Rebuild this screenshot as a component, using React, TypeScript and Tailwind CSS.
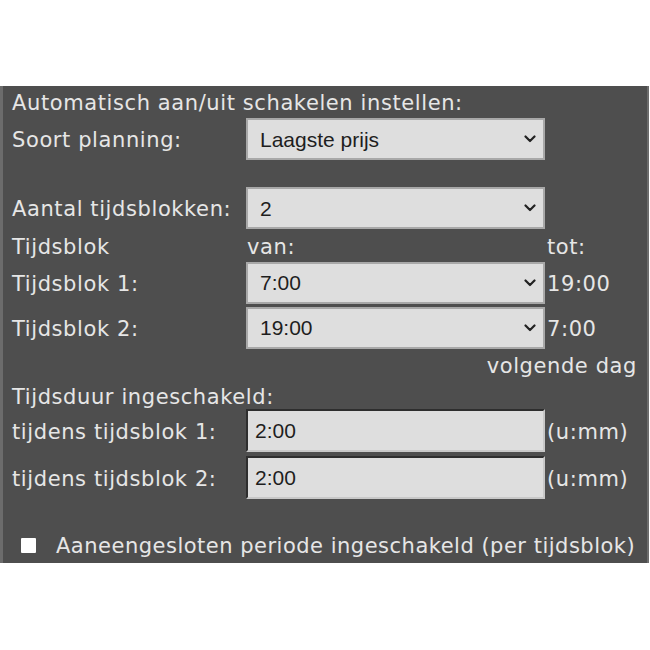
import React from "react";

const Chevron = () => (
  <svg width="12" height="8" viewBox="0 0 12 8" className="absolute right-[7px] top-1/2 -translate-y-1/2 pointer-events-none">
    <path d="M1.5 1.5 L6 6 L10.5 1.5" fill="none" stroke="#222" strokeWidth="2.2" strokeLinecap="round" strokeLinejoin="round" />
  </svg>
);

function Sel({ value }: { value: string }) {
  return (
    <div className="relative w-[299px] h-[42px] bg-[#dedede] border-2 border-[#a8a8a8] flex items-center pl-[12px] pt-[1px] text-[21px] tracking-normal text-[#1e1e1e] font-['Liberation_Sans',Arial,sans-serif]">
      <span>{value}</span>
      <Chevron />
    </div>
  );
}

function Inp({ value }: { value: string }) {
  return (
    <div className="w-[299px] h-[43px] bg-[#dedede] border-2 border-t-[#2e2e2e] border-l-[#2e2e2e] border-r-[#c8c8c8] border-b-[#c8c8c8] flex items-center pl-[7px] pt-[1px] text-[21px] tracking-normal text-[#1e1e1e] font-['Liberation_Sans',Arial,sans-serif]">
      {value}
    </div>
  );
}

export default function App() {
  const lbl = "w-[234px] shrink-0 pt-[4px]";
  const t = "pt-[4px]";
  return (
    <div className="w-[650px] h-[650px] bg-white overflow-hidden">
      <div className="h-[86px]" />
      <div className="w-[649px] h-[477px] bg-[#4e4e4e] border-l-[3px] border-l-[#6c6c6c] border-r-[2px] border-r-[#6c6c6c] pl-[9px] text-[21px] tracking-[0.6px] text-[#e6e6e6] font-['DejaVu_Sans',Verdana,sans-serif] flex flex-col">
        <div className="h-[32px] flex items-center"><div className={t}>Automatisch aan/uit schakelen instellen:</div></div>
        <div className="h-[42px] flex items-center">
          <div className={lbl}>Soort planning:</div>
          <Sel value="Laagste prijs" />
        </div>
        <div className="h-[27px]" />
        <div className="h-[42px] flex items-center">
          <div className={lbl}>Aantal tijdsblokken:</div>
          <Sel value="2" />
        </div>
        <div className="h-[33px] flex items-center">
          <div className={lbl}>Tijdsblok</div>
          <div className="w-[299px] pl-[1px] pt-[4px]">van:</div>
          <div className="pl-[2px] pt-[4px]">tot:</div>
        </div>
        <div className="h-[41px] flex items-center">
          <div className={lbl}>Tijdsblok 1:</div>
          <Sel value="7:00" />
          <div className="pl-[2px] pt-[4px]">19:00</div>
        </div>
        <div className="h-[4px]" />
        <div className="h-[41px] flex items-center">
          <div className={lbl}>Tijdsblok 2:</div>
          <Sel value="19:00" />
          <div className="pl-[2px] pt-[4px]">7:00</div>
        </div>
        <div className="h-[34px] flex items-center justify-end pr-[10px]"><div className={t}>volgende dag</div></div>
        <div className="h-[27px] flex items-center"><div className={t}>Tijdsduur ingeschakeld:</div></div>
        <div className="h-[43px] flex items-center">
          <div className={lbl}>tijdens tijdsblok 1:</div>
          <Inp value="2:00" />
          <div className="pl-[2px] pt-[4px]">(u:mm)</div>
        </div>
        <div className="h-[5px]" />
        <div className="h-[41px] flex items-center">
          <div className={lbl}>tijdens tijdsblok 2:</div>
          <Inp value="2:00" />
          <div className="pl-[2px] pt-[4px]">(u:mm)</div>
        </div>
        <div className="h-[30px]" />
        <div className="h-[34px] flex items-center">
          <div className="w-[15px] h-[15px] bg-white ml-[9px] mr-[20px] rounded-[1px] shrink-0" />
          <span className="whitespace-nowrap tracking-[0.5px] pt-[4px]">Aaneengesloten periode ingeschakeld (per tijdsblok)</span>
        </div>
      </div>
    </div>
  );
}
